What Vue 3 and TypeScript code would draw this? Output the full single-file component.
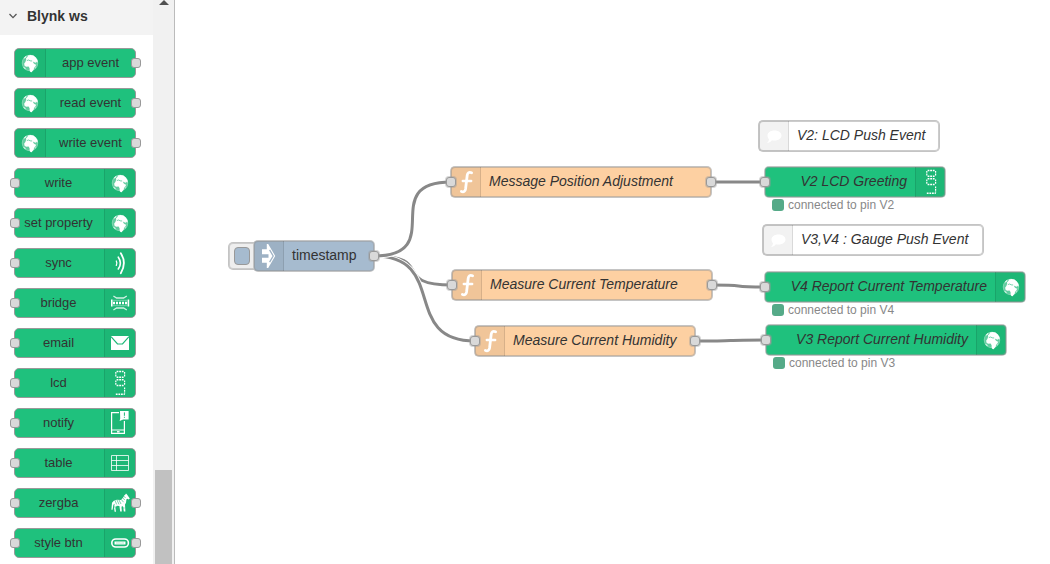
<script setup lang="ts">
import { ref } from 'vue'

type IconName =
  | 'globe' | 'sync' | 'bridge' | 'mail' | 'lcd' | 'notify'
  | 'table' | 'zebra' | 'pill' | 'inject' | 'fn' | 'comment'

interface PaletteNode {
  label: string
  icon: IconName
  side: 'left' | 'right'
  input: boolean
  output: boolean
}

interface FlowNode {
  id: string
  label: string
  kind: 'inject' | 'function' | 'comment' | 'blynk'
  icon: IconName
  x: number
  y: number
  w: number
  input: boolean
  output: boolean
  status?: string
}

const open = ref(true)

const palette: PaletteNode[] = [
  { label: 'app event', icon: 'globe', side: 'left', input: false, output: true },
  { label: 'read event', icon: 'globe', side: 'left', input: false, output: true },
  { label: 'write event', icon: 'globe', side: 'left', input: false, output: true },
  { label: 'write', icon: 'globe', side: 'right', input: true, output: false },
  { label: 'set property', icon: 'globe', side: 'right', input: true, output: false },
  { label: 'sync', icon: 'sync', side: 'right', input: true, output: false },
  { label: 'bridge', icon: 'bridge', side: 'right', input: true, output: false },
  { label: 'email', icon: 'mail', side: 'right', input: true, output: false },
  { label: 'lcd', icon: 'lcd', side: 'right', input: true, output: false },
  { label: 'notify', icon: 'notify', side: 'right', input: true, output: false },
  { label: 'table', icon: 'table', side: 'right', input: true, output: false },
  { label: 'zergba', icon: 'zebra', side: 'right', input: true, output: true },
  { label: 'style btn', icon: 'pill', side: 'right', input: true, output: true },
]

// Canvas coordinates start at the left edge of the workspace.
const nodes: FlowNode[] = [
  { id: 'ts', label: 'timestamp', kind: 'inject', icon: 'inject', x: 79, y: 241, w: 120, input: false, output: true },
  { id: 'msg', label: 'Message Position Adjustment', kind: 'function', icon: 'fn', x: 276, y: 167, w: 260, input: true, output: true },
  { id: 'temp', label: 'Measure Current Temperature', kind: 'function', icon: 'fn', x: 277, y: 270, w: 260, input: true, output: true },
  { id: 'hum', label: 'Measure Current Humidity', kind: 'function', icon: 'fn', x: 300, y: 326, w: 220, input: true, output: true },
  { id: 'c1', label: 'V2: LCD Push Event', kind: 'comment', icon: 'comment', x: 584, y: 121, w: 180, input: false, output: false },
  { id: 'v2', label: 'V2 LCD Greeting', kind: 'blynk', icon: 'lcd', x: 590, y: 167, w: 180, input: true, output: false, status: 'connected to pin V2' },
  { id: 'c2', label: 'V3,V4 : Gauge Push Event', kind: 'comment', icon: 'comment', x: 588, y: 225, w: 220, input: false, output: false },
  { id: 'v4', label: 'V4 Report Current Temperature', kind: 'blynk', icon: 'globe', x: 590, y: 272, w: 260, input: true, output: false, status: 'connected to pin V4' },
  { id: 'v3', label: 'V3 Report Current Humidity', kind: 'blynk', icon: 'globe', x: 591, y: 325, w: 240, input: true, output: false, status: 'connected to pin V3' },
]

const links: [string, string][] = [
  ['ts', 'temp'],
  ['ts', 'hum'],
  ['ts', 'msg'],
  ['msg', 'v2'],
  ['temp', 'v4'],
  ['hum', 'v3'],
]

function wirePath([from, to]: [string, string]): string {
  const a = nodes.find((n) => n.id === from)!
  const b = nodes.find((n) => n.id === to)!
  const x1 = a.x + a.w
  const y1 = a.y + 15
  const x2 = b.x
  const y2 = b.y + 15
  const reach = Math.min(100, Math.hypot(x2 - x1, y2 - y1)) * 0.75
  return `M${x1} ${y1}C${x1 + reach} ${y1} ${x2 - reach} ${y2} ${x2} ${y2}`
}

const wires = links.map(wirePath)
</script>

<template>
  <svg class="sprite" aria-hidden="true">
    <symbol id="i-globe" viewBox="0 0 30 30">
      <circle cx="15" cy="15" r="8.200" fill="#fff" fill-opacity=".3" />
      <circle cx="15" cy="15" r="7.800" fill="none" stroke="#fff" stroke-opacity=".25" stroke-width=".8" />
      <path fill="#fff" d="M11.200 11.600l-.2-1.400 1.400-1.200.6-1.400 2.400-.6 3 .6 2.400 1.800 1.600 2.600.4 2.200-1 .2-.8-.8-.6 1.600-1.200-1.200-1.200-.2.6 1.400 1.600 1.400 1.200-.2-1 1.800-1.400 1.600-.2 1.800-1.200 1.400-1 1.200-1.200-.2-.8-1.800v-2l-1-1.600-2.600.2-1.600-1.200-.2-2 1.200-1.600z" />
      <path fill="#fff" d="M8.600 10.400l1.600-2 1.400-.6-.8 1.600-1.400 1.200zM19.600 19.600l.8-1.200.2.800-.6 1.200z" />
      <path fill="none" stroke="#1cb877" stroke-width=".6" d="M11.800 12.600l1.800-.6 1.600.8 2 .2" />
      <path fill="none" stroke="#fff" stroke-opacity=".6" stroke-width="1.200" d="M8.600 19l2 2.200" />
    </symbol>
    <symbol id="i-sync" viewBox="0 0 30 30">
      <g fill="none" stroke="#fff" stroke-linecap="round">
        <path stroke-width="1.3" d="M11.3 13q1.2 2.2 0 4.4" />
        <path stroke-width="1.6" d="M13.3 9.2q4.2 5.8 0 11.8" />
        <path stroke-width="1.8" d="M15.8 5.2q6.2 9.8 0 20" />
      </g>
    </symbol>
    <symbol id="i-bridge" viewBox="0 0 30 30">
      <g fill="none" stroke="#fff">
        <path stroke-opacity=".8" stroke-width="1.3" d="M8.4 8l3.2 2h7l3.2-2M8.4 22l3.2-2h7l3.2 2" />
        <path stroke-width="1.6" d="M6.8 11.5v7M23.4 11.5v7" />
        <path stroke-opacity=".5" stroke-width=".8" d="M8 12.3h14M8 17.7h14" />
        <path stroke-width="2.4" stroke-dasharray="2 1" d="M8 15h15" />
      </g>
    </symbol>
    <symbol id="i-mail" viewBox="0 0 30 30">
      <path fill="#fff" d="M6 8h18v14H6z" />
      <path fill="none" stroke="#1cb877" stroke-width="1.2" d="M6 8.6l6.5 7.4h5L24 8.6" />
    </symbol>
    <symbol id="i-lcd" viewBox="0 0 30 30">
      <g fill="none" stroke="#fff" stroke-width="1.5" stroke-dasharray="1.8 .8">
        <path d="M11.6 3.500h7.200M11.6 9.200h7.200M11.6 11.800h7.200M11.6 17.500h7.200M10.8 26.200h9" />
        <path stroke-width="1.2" d="M10.8 4v4.800M19.6 4v4.800M10.8 12.400v4.600M19.6 12.400v4.600M19.6 19.400v6" />
      </g>
    </symbol>
    <symbol id="i-notify" viewBox="0 0 30 30">
      <path fill="none" stroke="#fff" stroke-width="1.2" d="M14 4.6H6.6v20.8h12.8V13M6.6 22h12.8" />
      <path stroke="#fff" stroke-width="1.4" d="M12 23.8h2.6" />
      <path fill="#fff" d="M15 3h8.6v8.4h-5.4L14.6 13l.6-2.4z" />
      <path stroke="#1cb877" stroke-width="1" d="M19.4 4.4v3.4M19.4 8.8v1" />
    </symbol>
    <symbol id="i-table" viewBox="0 0 30 30">
      <path fill="none" stroke="#fff" stroke-opacity=".8" d="M6.5 7.5h17v15h-17zM6.5 12.5h17M6.5 17.5h17M11.5 7.5v15" />
    </symbol>
    <symbol id="i-zebra" viewBox="0 0 30 30">
      <path fill="#fff" d="M6.4 21.8l.6-7 1.8-2 3-1 4 .2 2.4-2.4 1-2.2 1.4-1.2.4-.8 1 1 1.4 2.2 1.4 2-1 .8-1.6-.6-.8.6-.4 3.4-1 1.6.4 7.2h-1.6l-.8-5.400-1.4.2.2 5.200h-1.6l-.8-5.600-2.6-.2-1.4 2 .6 4H9.6l-.6-4.400.6-3.600-1.2 1-.8 5z" />
      <path fill="none" stroke="#1cb877" stroke-width=".6" d="M10 12.4l1.6 4M12 12l2 4.4M14 12l2 4M16 11.2l2.6 3M17.4 9.6l2.4 2.4M18.6 8l2 2M9 19h2M16.6 20h3" />
    </symbol>
    <symbol id="i-pill" viewBox="0 0 30 30">
      <rect x="6.8" y="11" width="16.6" height="8" rx="4" fill="none" stroke="#fff" stroke-width="1.6" />
      <path stroke="#fff" stroke-width="3" d="M9.500 15h11" />
      <path stroke="#1cb877" stroke-opacity=".6" stroke-width=".6" d="M12 14v2M14 14v2M16 14.4v1.6M18 14v2" />
    </symbol>
    <symbol id="i-inject" viewBox="0 0 30 30">
      <path fill="#fff" d="M8 8.200h4.800V3h1.400l7 12-7 12h-1.400v-5.200H8v-5h6.500v-3.600H8z" />
      <path fill="none" stroke="#9eb2c5" stroke-width="1.3" d="M15.600 8.800l3.600 6.200-3.600 6.200" />
    </symbol>
    <symbol id="i-fn" viewBox="0 0 30 30">
      <path fill="none" stroke="#fff" stroke-width="2.8" stroke-linecap="round" stroke-linejoin="round" d="M20.6 5.700q-3.800-1.400-4.400 2.600l-1.600 13.400q-.6 4-4.200 2.800" />
      <path stroke="#fff" stroke-width="2.4" stroke-linecap="round" d="M11.800 14h8.400" />
    </symbol>
    <symbol id="i-comment" viewBox="0 0 30 30">
      <path fill="#fff" d="M15.500 9.500c4.200 0 7 2.200 7 5s-2.800 5-7 5c-1 0-1.800-.1-2.600-.3-1.400 1.800-3 2.600-4.900 2.600 1.200-1 1.900-2.200 2-3.600-1-.9-1.500-2.200-1.500-3.700 0-2.800 2.800-5 7-5z" />
    </symbol>
  </svg>

  <div class="editor">
    <aside class="sidebar">
      <div class="list">
        <button class="category" type="button" :aria-expanded="open" @click="open = !open">
          <svg class="chevron" viewBox="0 0 10 10" aria-hidden="true">
            <path d="M1.500 3l3.500 3.600L8.500 3" fill="none" stroke="#555" stroke-width="1.300" />
          </svg>
          <span>Blynk ws</span>
        </button>
        <ul v-if="open" class="items">
          <li v-for="n in palette" :key="n.label" class="pnode" :class="n.side">
            <span class="icon"><svg><use :href="'#i-' + n.icon" /></svg></span>
            <span class="plabel">{{ n.label }}</span>
            <i v-if="n.input" class="port in"></i>
            <i v-if="n.output" class="port out"></i>
          </li>
        </ul>
      </div>
      <div class="track">
        <div class="travel">
          <svg class="arrow" viewBox="0 0 10 5" aria-hidden="true"><path d="M0 5L5 0l5 5z" fill="#505050" /></svg>
        </div>
        <div class="thumb"></div>
      </div>
    </aside>

    <main class="canvas">
      <svg class="wires" aria-hidden="true">
        <g v-for="d in wires" :key="d">
          <path class="halo" :d="d" />
          <path class="wire" :d="d" />
        </g>
      </svg>
      <div
        v-for="n in nodes"
        :key="n.id"
        class="node"
        :class="n.kind"
        :style="{ left: n.x + 'px', top: n.y + 'px', width: n.w + 'px' }"
      >
        <div v-if="n.kind === 'inject'" class="trigger">
          <button type="button" aria-label="Inject timestamp"></button>
        </div>
        <div class="body">
          <span class="icon"><svg><use :href="'#i-' + n.icon" /></svg></span>
          <span class="label">{{ n.label }}</span>
        </div>
        <i v-if="n.input" class="port in"></i>
        <i v-if="n.output" class="port out"></i>
        <div v-if="n.status" class="status"><i class="dot"></i>{{ n.status }}</div>
      </div>
    </main>
  </div>
</template>

<style>
body {
  margin: 0;
  background: #fff;
}
</style>

<style scoped>
.sprite {
  position: absolute;
  width: 0;
  height: 0;
}

.editor {
  display: flex;
  height: 100vh;
  overflow: hidden;
  font-family: "Liberation Sans", Arial, Helvetica, sans-serif;
  color: #333;
}

.sidebar {
  display: flex;
  flex: none;
  border-right: 1px solid #bbb;
}

.list {
  width: 153px;
  overflow: hidden;
}

.category {
  display: flex;
  align-items: center;
  gap: 9px;
  width: 100%;
  height: 35px;
  padding: 0 8px 3px;
  border: 0;
  background: #f3f3f3;
  color: #333;
  font: bold 14px/20px "Liberation Sans", Arial, sans-serif;
  text-align: left;
  cursor: pointer;
}

.chevron {
  width: 10px;
  height: 10px;
}

.items {
  display: flex;
  flex-direction: column;
  gap: 10px;
  margin: 0;
  padding: 13px 17px 10px 14px;
  list-style: none;
}

.pnode {
  position: relative;
  display: flex;
  flex: none;
  box-sizing: border-box;
  height: 30px;
  border: 1px solid #999;
  border-radius: 5px;
  background: #1fc17d;
  font-size: 13px;
  line-height: 28px;
  cursor: move;
}

.pnode.right {
  flex-direction: row-reverse;
}

.plabel {
  flex: 1;
  text-align: center;
  white-space: nowrap;
}

.right .plabel {
  padding-right: 2px;
}

.icon {
  display: block;
  flex: none;
  box-sizing: border-box;
  width: 31px;
  background: rgba(0, 0, 0, 0.05);
  border-right: 1px solid rgba(0, 0, 0, 0.1);
}

.right .icon,
.blynk .icon {
  border-right: 0;
  border-left: 1px solid rgba(0, 0, 0, 0.1);
}

.icon svg {
  display: block;
  width: 30px;
  height: 30px;
}

.pnode .icon svg {
  margin-top: -1px;
}

.port {
  position: absolute;
  top: 9px;
  box-sizing: border-box;
  width: 10px;
  height: 10px;
  border: 1px solid #999;
  border-radius: 3px;
  background: #d9d9d9;
}

.port.in {
  left: -5px;
}

.port.out {
  right: -6px;
}

.track {
  display: flex;
  flex-direction: column;
  align-items: center;
  width: 21px;
  background: #f1f1f1;
}

.travel {
  flex: 5 0 0;
}

.arrow {
  display: block;
  width: 10px;
  height: 5px;
}

.thumb {
  flex: 1 0 0;
  width: 17px;
  background: #c1c1c1;
}

.canvas {
  position: relative;
  flex: 1;
  overflow: hidden;
}

.wires {
  position: absolute;
  inset: 0;
  width: 100%;
  height: 100%;
}

.wires path {
  fill: none;
}

.halo {
  stroke: #fff;
  stroke-width: 5px;
}

.wire {
  stroke: #888;
  stroke-width: 3px;
}

.node {
  position: absolute;
  font-size: 14px;
  font-style: italic;
}

.body {
  position: relative;
  display: flex;
  box-sizing: border-box;
  height: 30px;
  border-radius: 4px;
  background: #fdd0a2;
  box-shadow: 0 0 0 1px #c4c4c4, inset 0 0 0 1px rgba(153, 153, 153, 0.5);
  line-height: 28px;
  white-space: nowrap;
}

.inject {
  font-style: normal;
}

.inject .body {
  background: #a6bbcf;
}

.comment .body {
  background: #fff;
}

.blynk .body {
  flex-direction: row-reverse;
  background: #1fc17d;
}

.node .icon {
  width: 30px;
}

.node .label {
  padding: 0 8px;
}

.node .port {
  top: 10px;
  box-shadow: 0 0 0 1px rgba(153, 153, 153, 0.4);
}

.node .port.out {
  right: -5px;
}

.trigger {
  position: absolute;
  top: 2px;
  left: -25px;
  box-sizing: border-box;
  width: 32px;
  height: 26px;
  padding: 4px 5px;
  border-radius: 4px;
  background: #eee;
  box-shadow: 0 0 0 1px #c4c4c4, inset 0 0 0 1px rgba(153, 153, 153, 0.4);
}

.trigger button {
  display: block;
  width: 16px;
  height: 18px;
  padding: 0;
  border: 1px solid #999;
  border-radius: 4px;
  background: #a6bbcf;
  cursor: pointer;
}

.status {
  display: flex;
  align-items: center;
  gap: 4px;
  padding: 1px 0 0 7px;
  color: #888;
  font-size: 12px;
  font-style: normal;
  line-height: 14px;
  white-space: nowrap;
}

.dot {
  width: 12px;
  height: 12px;
  border-radius: 3px;
  background: #5a8;
}
</style>
